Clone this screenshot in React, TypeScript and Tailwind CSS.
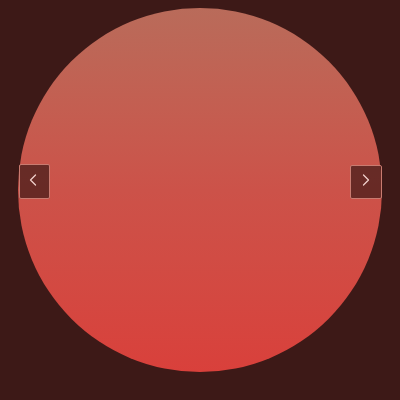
import React from 'react';
import { ChevronLeft, ChevronRight } from 'lucide-react';

export default function App() {
    return (
        <div className="w-[400px] h-[400px] bg-[#3d1917] flex justify-center pt-[8px]">
            <div className="relative w-[364px] h-[364px]">
                {/* slide */}
                <div className="w-full h-full rounded-full bg-gradient-to-b from-[#b96b5a] via-[#cc5249] to-[#d9403b]" />

                <button className="absolute left-[1px] top-[156px] w-[31px] h-[35px] flex items-center justify-center bg-[#3d1917]/70 border border-[#c97b70] rounded-[2px] text-[#f0d0cb]">
                    <ChevronLeft className="w-5 h-5 -ml-[4px] -mt-[4px]" strokeWidth={1.5} />
                </button>
                <button className="absolute right-0 top-[157px] w-[32px] h-[34px] flex items-center justify-center bg-[#3d1917]/70 border border-[#c97b70] rounded-[2px] text-[#f0d0cb]">
                    <ChevronRight className="w-5 h-5 -mt-[4px]" strokeWidth={1.5} />
                </button>
            </div>
        </div>
    );
}
